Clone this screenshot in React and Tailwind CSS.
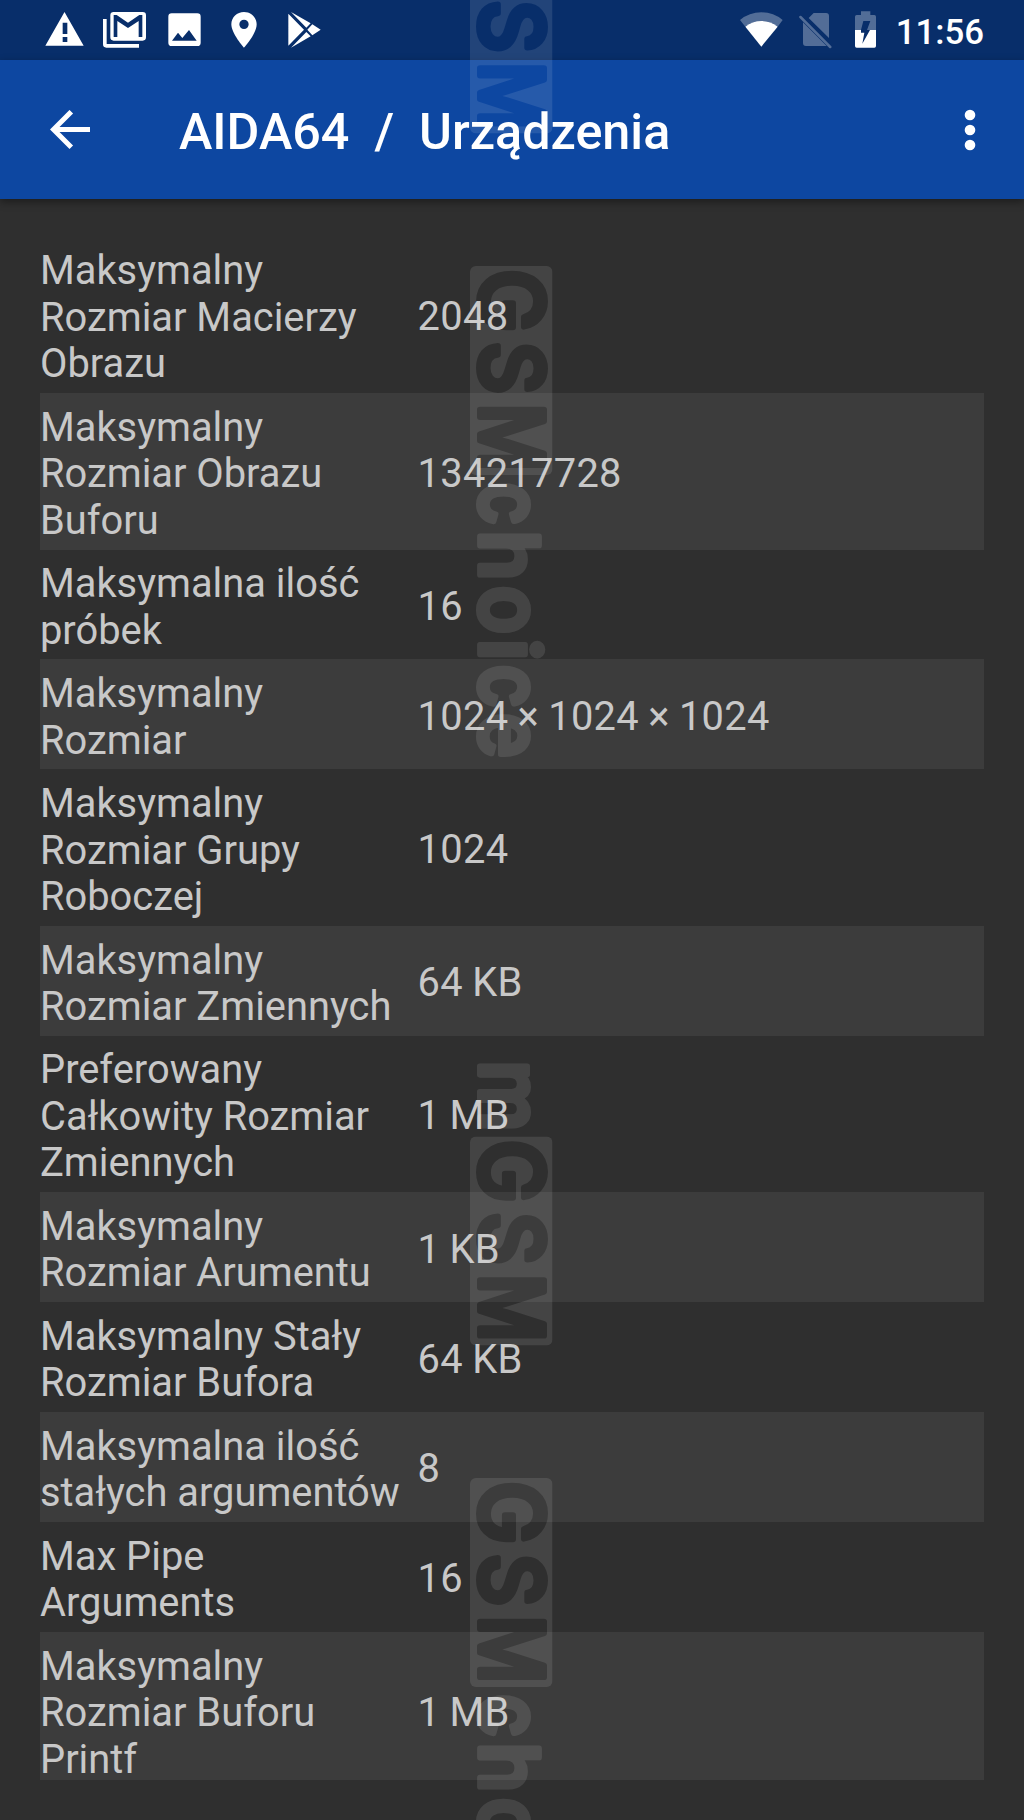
const ROWS = [
  { label: ['Maksymalny', 'Rozmiar Macierzy', 'Obrazu'], value: '2048' },
  { label: ['Maksymalny', 'Rozmiar Obrazu', 'Buforu'], value: '134217728' },
  { label: ['Maksymalna ilość', 'próbek'], value: '16' },
  { label: ['Maksymalny', 'Rozmiar'], value: '1024 × 1024 × 1024' },
  { label: ['Maksymalny', 'Rozmiar Grupy', 'Roboczej'], value: '1024' },
  { label: ['Maksymalny', 'Rozmiar Zmiennych'], value: '64 KB' },
  { label: ['Preferowany', 'Całkowity Rozmiar', 'Zmiennych'], value: '1 MB' },
  { label: ['Maksymalny', 'Rozmiar Arumentu'], value: '1 KB' },
  { label: ['Maksymalny Stały', 'Rozmiar Bufora'], value: '64 KB' },
  { label: ['Maksymalna ilość', 'stałych argumentów'], value: '8' },
  { label: ['Max Pipe', 'Arguments'], value: '16' },
  { label: ['Maksymalny', 'Rozmiar Buforu', 'Printf'], value: '1 MB' },
]

function StatusBar() {
  return (
    <div className="flex h-[60px] items-center justify-between bg-[#082e6a] pl-[45px] pr-[40px] text-white">
      <div className="flex">
        {/* warning */}
        <svg className="h-[60px] w-[39px]" viewBox="135 0 117 180" fill="currentColor" fillRule="evenodd">
          <path d="M193.500 36L251 137H136ZM188 68V102H202V68ZM188 111V126H202V111Z" />
        </svg>
        {/* stacked mail */}
        <svg className="ml-[19px] h-[60px] w-[43px]" viewBox="309 0 129 180" fill="currentColor" fillRule="evenodd">
          <path d="M309 57H320V132H417V143H319Q309 143 309 133Z" />
          <path d="M341 36H428Q438 36 438 46V112Q438 122 428 122H341Q331 122 331 112V46Q331 36 341 36ZM341 45V111H352V63L384 84L416 63V111H427V45H418L384 68L350 45Z" />
        </svg>
        {/* picture */}
        <svg className="ml-[22px] h-[60px] w-[33px]" viewBox="504 0 99 180" fill="currentColor" fillRule="evenodd">
          <path d="M515 40H592Q602 40 602 50V128Q602 138 592 138H515Q505 138 505 128V50Q505 40 515 40ZM516 122H590L567 90L547 114L534 98Z" />
        </svg>
        {/* place */}
        <svg className="ml-[30px] h-[60px] w-[26px]" viewBox="693 0 78 180" fill="currentColor" fillRule="evenodd">
          <path d="M732 36C711 36 694 52 694 73C694 101 732 143 732 143S770 101 770 73C770 52 753 36 732 36ZM732 87A14 14 0 1 1 732 59A14 14 0 0 1 732 87Z" />
        </svg>
        {/* play store */}
        <svg className="ml-[31px] h-[60px] w-[33px]" viewBox="864 0 99 180" fill="currentColor">
          <path d="M865 41L912 89L865 137ZM873 36L932 70L919 83ZM873 143L919 96L932 109ZM937 73L962 89L937 106L922 89Z" />
        </svg>
      </div>
      <div className="flex items-center">
        {/* wifi */}
        <svg className="h-[60px] w-[43px]" viewBox="684 0 129 180" fill="currentColor">
          <path opacity=".3" d="M684 60Q712 37 748 37T812 60L797 80Q777 63 748 63T700 80Z" />
          <path d="M748 140L700 80Q720 63 748 63T797 80Z" />
        </svg>
        {/* no sim */}
        <svg className="ml-[16px] h-[60px] w-[33px]" viewBox="861 0 99 180" fill="currentColor" opacity=".3">
          <path d="M905 39H942Q951 39 951 48V114L890 54ZM873 67L944 138H882Q873 138 873 129Z" />
          <path d="M862 53Q860 50 863 48T868 48L958 139Q960 142 957 144T952 144Z" />
        </svg>
        {/* battery */}
        <svg className="ml-[23px] h-[60px] w-[21px]" viewBox="1029 0 63 180" fill="currentColor" fillRule="evenodd">
          <path opacity=".3" d="M1047 34H1075V45H1087Q1092 45 1092 50V90H1065L1075 63H1054L1047 90H1029V50Q1029 45 1034 45H1047Z" />
          <path d="M1029 90H1047V98H1057L1051 131L1074 90H1092V138Q1092 143 1087 143H1034Q1029 143 1029 138Z" />
        </svg>
        <span className="ml-[20px] mt-[5px] text-[34.800px] leading-none font-medium">11:56</span>
      </div>
    </div>
  )
}

function AppBar() {
  return (
    <div className="relative flex h-[139px] items-center bg-[#0d47a1] pl-[50px] pr-[48px] text-white shadow-[0_3px_8px_rgba(0,0,0,0.4)]">
      <svg className="h-[40px] w-[40px]" viewBox="0 0 40 40" fill="none" stroke="currentColor" strokeWidth="5">
        <path d="M40 19.500H4M21.300 1.700L3.500 19.500L21.300 37.300" />
      </svg>
      <h1 className="ml-[89px] mt-[5px] text-[50.300px] leading-none font-medium whitespace-pre">{'AIDA64  /  Urządzenia'}</h1>
      <svg className="ml-auto h-[42px] w-[12px]" viewBox="0 0 12 42" fill="currentColor">
        <circle cx="6" cy="6" r="5.300" />
        <circle cx="6" cy="21" r="5.300" />
        <circle cx="6" cy="36" r="5.300" />
      </svg>
    </div>
  )
}

// c = centre of the letter along the reading direction, sx / sy = stretch
const GSM = [
  { ch: 'G', c: 34.5, sx: 0.96, sy: 1 },
  { ch: 'S', c: 102, sx: 0.93, sy: 1 },
  { ch: 'M', c: 171.5, sx: 0.85, sy: 1 },
]
const CHOICE = [
  { ch: 'c', c: 237.5, sx: 0.86, sy: 1 },
  { ch: 'h', c: 289.5, sx: 0.97, sy: 0.95 },
  { ch: 'o', c: 344, sx: 0.93, sy: 1 },
  { ch: 'i', c: 383.5, sx: 1, sy: 0.95 },
  { ch: 'c', c: 420, sx: 0.86, sy: 1 },
  { ch: 'e', c: 469.5, sx: 0.88, sy: 1 },
]
const LEAD = [{ ch: 'm', c: -40.5, sx: 0.93, sy: 1 }]

function Letters({ items, size, color }) {
  return items.map(({ ch, c, sx, sy }) => (
    <text
      key={c}
      transform={`translate(${c} 0) scale(${sx} ${sy})`}
      textAnchor="middle"
      fontFamily="Inter, sans-serif"
      fontWeight="500"
      fontSize={size}
      fill={color}
      stroke={color}
      strokeWidth="6"
      strokeLinejoin="round"
    >
      {ch}
    </text>
  ))
}

function Mark({ id, y, before = false, after = false }) {
  return (
    <g transform={`translate(480 ${y}) rotate(90)`} opacity=".1">
      <mask id={id} maskUnits="userSpaceOnUse" x="-10" y="-90" width="240" height="120">
        <rect x="0" y="-72.500" width="209" height="82.500" rx="6" fill="#fff" />
        <Letters items={GSM} size={88} color="#000" />
      </mask>
      <rect x="0" y="-72.500" width="209" height="82.500" fill="#fff" mask={`url(#${id})`} />
      {before && <Letters items={LEAD} size={86} color="#fff" />}
      {after && <Letters items={CHOICE} size={86} color="#fff" />}
    </g>
  )
}

function Watermark() {
  return (
    <svg className="pointer-events-none absolute inset-0" width="1024" height="1820" viewBox="0 0 1024 1820">
      <Mark id="mark-a" y={-75.5} />
      <Mark id="mark-b" y={266} after />
      <Mark id="mark-c" y={1136.5} before />
      <Mark id="mark-d" y={1478} after />
    </svg>
  )
}

export default function App() {
  return (
    <div className="relative h-[1820px] w-[1024px] overflow-hidden bg-[#2f2f2f] font-['Roboto',sans-serif]">
      <StatusBar />
      <AppBar />
      <div className="mx-[40px] mt-[37.700px] h-[1543.500px] overflow-hidden text-[39.850px] leading-[46.460px] text-[#c8c8c8]">
        {ROWS.map((row, i) => (
          <div key={i} className="flex items-center pt-[11.700px] pb-[5.360px] even:bg-[#3c3c3c]">
            <div className="w-[40%] whitespace-nowrap">
              {row.label.map((line) => (
                <div key={line}>{line}</div>
              ))}
            </div>
            <div className="-mt-px tracking-[0.3px] [word-spacing:-1px]">{row.value}</div>
          </div>
        ))}
      </div>
      <Watermark />
    </div>
  )
}
